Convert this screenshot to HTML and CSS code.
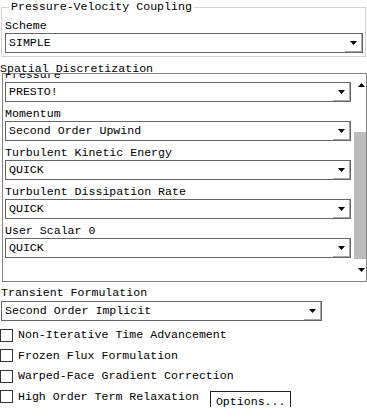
FILE: index.html
```html
<!DOCTYPE html>
<html lang="en">
<head>
    <meta charset="UTF-8">
    <title>Solution Methods</title>
    <link rel="stylesheet" href="styles.css">
</head>
<body>

    <fieldset class="group">
        <legend>Pressure-Velocity Coupling</legend>
        <div class="field-label">Scheme</div>
        <div class="dropdown">
            <span class="dropdown-value">SIMPLE</span>
            <span class="dropdown-btn"><svg width="7" height="4" viewBox="0 0 7 4"><polygon points="0,0 7,0 3.5,4" fill="#000"/></svg></span>
        </div>
    </fieldset>

    <div class="section-title">Spatial Discretization</div>
    <div class="scroll-box">
        <div class="scroll-content">
            <div class="scroll-inner">
                <div class="field-label">Pressure</div>
                <div class="dropdown">
                    <span class="dropdown-value">PRESTO!</span>
                    <span class="dropdown-btn"><svg width="7" height="4" viewBox="0 0 7 4"><polygon points="0,0 7,0 3.5,4" fill="#000"/></svg></span>
                </div>
                <div class="field-label">Momentum</div>
                <div class="dropdown">
                    <span class="dropdown-value">Second Order Upwind</span>
                    <span class="dropdown-btn"><svg width="7" height="4" viewBox="0 0 7 4"><polygon points="0,0 7,0 3.5,4" fill="#000"/></svg></span>
                </div>
                <div class="field-label">Turbulent Kinetic Energy</div>
                <div class="dropdown">
                    <span class="dropdown-value">QUICK</span>
                    <span class="dropdown-btn"><svg width="7" height="4" viewBox="0 0 7 4"><polygon points="0,0 7,0 3.5,4" fill="#000"/></svg></span>
                </div>
                <div class="field-label">Turbulent Dissipation Rate</div>
                <div class="dropdown">
                    <span class="dropdown-value">QUICK</span>
                    <span class="dropdown-btn"><svg width="7" height="4" viewBox="0 0 7 4"><polygon points="0,0 7,0 3.5,4" fill="#000"/></svg></span>
                </div>
                <div class="field-label">User Scalar 0</div>
                <div class="dropdown">
                    <span class="dropdown-value">QUICK</span>
                    <span class="dropdown-btn"><svg width="7" height="4" viewBox="0 0 7 4"><polygon points="0,0 7,0 3.5,4" fill="#000"/></svg></span>
                </div>
            </div>
        </div>
        <div class="scrollbar">
            <div class="scroll-arrow"><svg width="7" height="4" viewBox="0 0 7 4"><polygon points="0,4 7,4 3.5,0" fill="#000"/></svg></div>
            <div class="scroll-track"><div class="scroll-thumb"></div></div>
            <div class="scroll-arrow"><svg width="7" height="4" viewBox="0 0 7 4"><polygon points="0,0 7,0 3.5,4" fill="#000"/></svg></div>
        </div>
    </div>

    <div class="field-label plain">Transient Formulation</div>
    <div class="dropdown short">
        <span class="dropdown-value">Second Order Implicit</span>
        <span class="dropdown-btn"><svg width="7" height="4" viewBox="0 0 7 4"><polygon points="0,0 7,0 3.5,4" fill="#000"/></svg></span>
    </div>

    <div class="checklist">
        <div class="check-row"><span class="checkbox"></span>Non-Iterative Time Advancement</div>
        <div class="check-row"><span class="checkbox"></span>Frozen Flux Formulation</div>
        <div class="check-row"><span class="checkbox"></span>Warped-Face Gradient Correction</div>
        <div class="check-row"><span class="checkbox"></span>High Order Term Relaxation<button class="options-btn">Options...</button></div>
    </div>

</body>
</html>
```

FILE: styles.css
```css
/* General */
body {
    margin: 0;
    background-color: #ffffff;
    color: #000;
    font-family: "Liberation Mono", monospace;
    font-size: 11.6px;
    line-height: 14px;
}

/* Group box */
.group {
    margin: 0 1px;
    padding: 0 2px 3px 3px;
    border: 1px solid #d4d4d4;
    min-inline-size: 0;
}

.group legend {
    margin-left: 4px;
    padding: 0 2px;
    line-height: 14px;
}

.field-label {
    padding-top: 5px;
    line-height: 14px;
}

.field-label.plain {
    padding: 4px 0 0 1px;
}

/* Dropdowns */
.dropdown {
    display: flex;
    height: 20px;
    box-sizing: border-box;
    border: 1px solid #666;
    background-color: #fff;
}

.dropdown-value {
    flex: 1;
    padding-left: 3px;
    line-height: 18px;
    white-space: nowrap;
}

.dropdown-btn {
    width: 17px;
    display: flex;
    align-items: center;
    justify-content: center;
    box-shadow: inset -1px -1px 0 #a8a8a8;
}

.dropdown.short {
    width: 321px;
    margin: 1px 0 0 1px;
}

/* Spatial discretization */
.section-title {
    position: relative;
    z-index: 1;
    margin-top: 5px;
    line-height: 14px;
}

.scroll-box {
    display: flex;
    margin: -3px 0 0 2px;
    width: 365px;
    height: 209px;
    box-sizing: border-box;
    border: 1px solid #828282;
    background-color: #fff;
}

.scroll-content {
    flex: 1;
    overflow: hidden;
    padding: 0 2px;
}

/* scrolled position of the list */
.scroll-inner {
    margin-top: -11px;
}

.scrollbar {
    width: 13px;
    display: flex;
    flex-direction: column;
}

.scroll-arrow {
    height: 22px;
    display: flex;
    align-items: center;
    justify-content: flex-end;
    padding-right: 1px;
}

.scroll-track {
    flex: 1;
    display: flex;
    flex-direction: column;
    justify-content: flex-end;
    align-items: flex-end;
}

.scroll-thumb {
    width: 12px;
    height: 127px;
    background-color: #bcbcbc;
}

/* Checkboxes */
.checklist {
    margin-top: 4px;
}

.check-row {
    display: flex;
    align-items: center;
    height: 20.5px;
    white-space: nowrap;
}

.checkbox {
    width: 13px;
    height: 13px;
    box-sizing: border-box;
    border: 1px solid #333;
    background-color: #fff;
    margin-right: 5px;
}

.options-btn {
    align-self: flex-start;
    margin: 4px 0 0 11px;
    height: 22px;
    padding: 0 5px;
    border: 1px solid #222;
    background-color: #fff;
    font-family: "Liberation Mono", monospace;
    font-size: 11.6px;
    color: #000;
}
```
